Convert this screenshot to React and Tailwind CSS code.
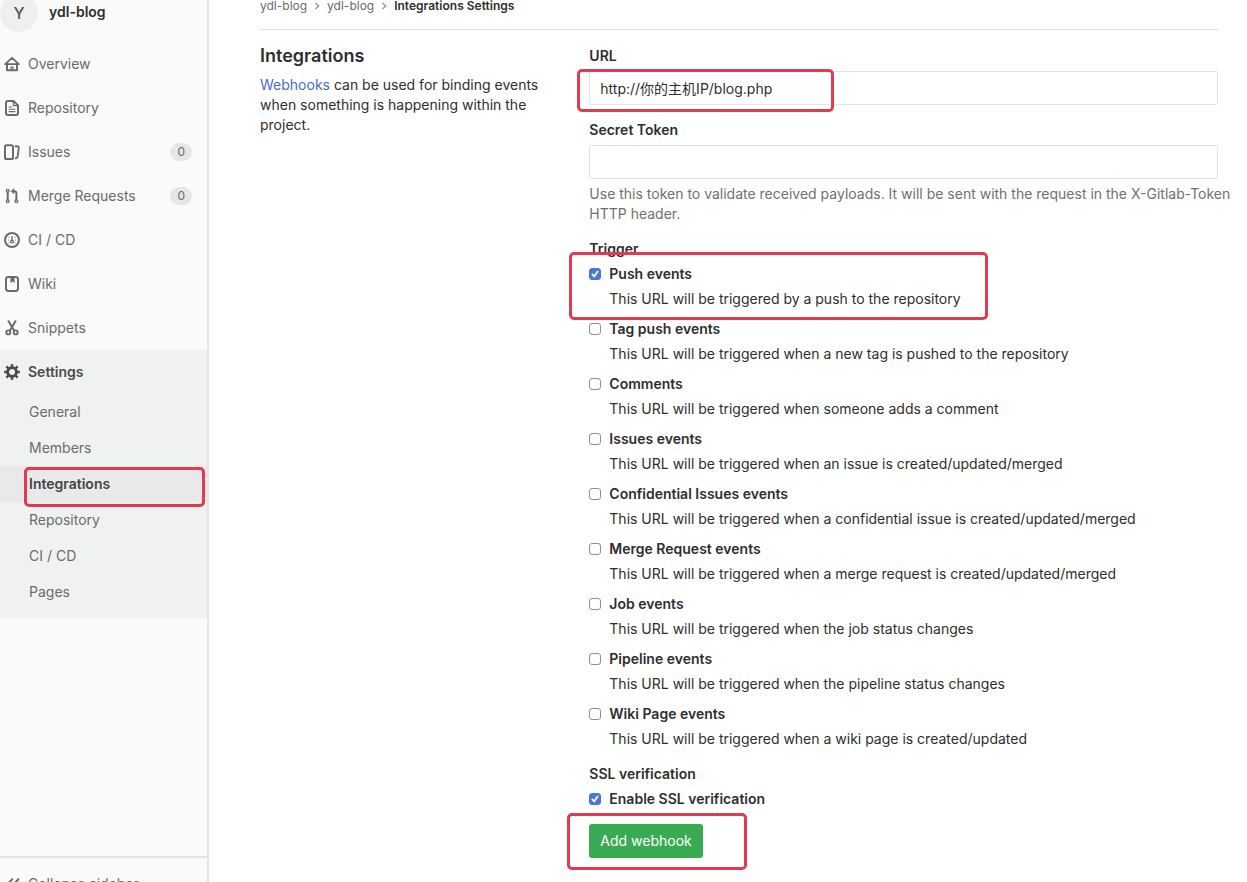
import { useState } from "react";

const Icon = ({ children }) => (
    <svg
        className="size-4 shrink-0"
        viewBox="0 0 16 16"
        fill="none"
        stroke="currentColor"
        strokeWidth="2"
        strokeLinecap="round"
        strokeLinejoin="round"
        aria-hidden="true"
    >
        {children}
    </svg>
);

const icons = {
    overview: (
        <Icon>
            <path d="M1.2 8.2 8 1.8l6.8 6.4z" strokeWidth="1.8" />
            <path d="M3 8.5V14.2h10V8.5" strokeWidth="2" />
            <path d="M7 13.5v-2.3h2v2.3" strokeWidth="1.2" />
        </Icon>
    ),
    repository: (
        <Icon>
            <path d="M4 1h5.5L14 5.5V13a2 2 0 0 1-2 2H4a2 2 0 0 1-2-2V3a2 2 0 0 1 2-2z" />
            <path d="M9.3 1.5V5.7H13.5" strokeWidth="1.2" />
            <path d="M5 7h2.5M5 9.3h6M5 11.6h6" strokeWidth="1.1" />
        </Icon>
    ),
    issues: (
        <Icon>
            <rect x="1" y="1.2" width="8" height="13.8" rx="1.6" />
            <path d="M11.6 2.2h1.6a1.6 1.6 0 0 1 1.6 1.8l-1.2 8.6a1.8 1.8 0 0 1-1.8 1.6" strokeWidth="1.9" />
        </Icon>
    ),
    merge: (
        <Icon>
            <circle cx="3.7" cy="2.8" r="1.4" strokeWidth="1.3" />
            <circle cx="3.7" cy="13.3" r="1.4" strokeWidth="1.3" />
            <circle cx="12.4" cy="13.3" r="1.4" strokeWidth="1.3" />
            <path d="M3.7 4.5v7" strokeWidth="2" />
            <path d="M12.4 11.5V5.3a2 2 0 0 0-2-2H9.6" strokeWidth="2" />
            <path d="M10 .9v4.8L7 3.3z" fill="currentColor" strokeWidth=".5" />
        </Icon>
    ),
    ci: (
        <Icon>
            <circle cx="8" cy="8" r="7" />
            <path d="M8 4.6v3.6" strokeWidth="1.3" />
            <circle cx="8" cy="9.5" r="1.4" strokeWidth="1.3" />
            <path d="M4.3 8h.1M11.6 8h.1M5 5.3h.1M10.9 5.3h.1M5 10.8h.1M10.9 10.8h.1" strokeWidth="1.1" />
        </Icon>
    ),
    wiki: (
        <Icon>
            <rect x="2" y="1" width="12" height="14" rx="2.4" />
            <path d="M6.6 1.5v5.2L8.5 5.2l1.9 1.5V1.5z" fill="currentColor" strokeWidth=".3" />
        </Icon>
    ),
    snippets: (
        <Icon>
            <path d="M4.6 1.2 9.9 10.2M11.4 1.2 6.1 10.2" />
            <circle cx="4.3" cy="12.4" r="2" strokeWidth="1.9" />
            <circle cx="11.7" cy="12.4" r="2" strokeWidth="1.9" />
        </Icon>
    ),
    settings: (
        <Icon>
            <circle cx="8" cy="8" r="4.5" strokeWidth="3" />
            <circle
                cx="8"
                cy="8"
                r="6.6"
                strokeWidth="2.6"
                strokeLinecap="butt"
                pathLength="16"
                strokeDasharray="0.9 1.1"
                strokeDashoffset="0.45"
            />
        </Icon>
    ),
};

const navItems = [
    { label: "Overview", icon: icons.overview },
    { label: "Repository", icon: icons.repository },
    { label: "Issues", icon: icons.issues, count: 0 },
    { label: "Merge Requests", icon: icons.merge, count: 0 },
    { label: "CI / CD", icon: icons.ci },
    { label: "Wiki", icon: icons.wiki },
    { label: "Snippets", icon: icons.snippets },
];

const settingsItems = ["General", "Members", "Integrations", "Repository", "CI / CD", "Pages"];

const triggers = [
    { id: "push", label: "Push events", text: "This URL will be triggered by a push to the repository" },
    { id: "tag", label: "Tag push events", text: "This URL will be triggered when a new tag is pushed to the repository" },
    { id: "comments", label: "Comments", text: "This URL will be triggered when someone adds a comment" },
    { id: "issues", label: "Issues events", text: "This URL will be triggered when an issue is created/updated/merged" },
    { id: "confidential", label: "Confidential Issues events", text: "This URL will be triggered when a confidential issue is created/updated/merged" },
    { id: "merge", label: "Merge Request events", text: "This URL will be triggered when a merge request is created/updated/merged" },
    { id: "job", label: "Job events", text: "This URL will be triggered when the job status changes" },
    { id: "pipeline", label: "Pipeline events", text: "This URL will be triggered when the pipeline status changes" },
    { id: "wiki", label: "Wiki Page events", text: "This URL will be triggered when a wiki page is created/updated" },
];

// red outline drawn over the part being pointed at
const Highlight = ({ className }) => (
    <div className={`pointer-events-none absolute z-10 rounded-[5px] border-3 border-[#e23a50] ${className}`} />
);

const CheckField = ({ id, label, defaultChecked }) => {
    const [checked, setChecked] = useState(Boolean(defaultChecked));

    return (
        <div className="flex h-5 items-center gap-2">
            <span className="grid size-3 place-items-center">
                <input
                    id={id}
                    type="checkbox"
                    checked={checked}
                    onChange={(e) => setChecked(e.target.checked)}
                    className="col-start-1 row-start-1 size-3 appearance-none rounded-[3px] border border-[#8f8f8f] bg-white checked:border-[#4a76d8] checked:bg-[#4a76d8]"
                />
                {checked && (
                    <svg className="pointer-events-none col-start-1 row-start-1 size-3" viewBox="0 0 12 12" fill="none" stroke="white" strokeWidth="1.8" strokeLinecap="round" strokeLinejoin="round" aria-hidden="true">
                        <path d="M3.4 6.4 5.2 8.5 8.6 3.6" />
                    </svg>
                )}
            </span>
            <label htmlFor={id} className="font-semibold">{label}</label>
        </div>
    );
};

const Sidebar = () => {
    return (
        <aside className="flex w-[209px] shrink-0 flex-col overflow-hidden border-r-2 border-[#e4e4e4] bg-[#fafafa] text-[#6b6b6b]">
            <a href="#" className="flex h-[42px] items-start gap-[11px] text-[#2e2e2e]">
                <span className="-mt-1.5 flex size-[38px] shrink-0 items-center justify-center rounded-full bg-[#eef0ef] text-base font-medium text-[#555]">
                    Y
                </span>
                <span className="leading-6 font-semibold">ydl-blog</span>
            </a>
            <nav>
                {navItems.map((item) => (
                    <a key={item.label} href="#" className="flex h-11 items-center gap-2 pr-[15px] pl-1">
                        {item.icon}
                        <span>{item.label}</span>
                        {item.count !== undefined && (
                            <span className="ml-auto rounded-full bg-[#e6e6e6] px-[7px] text-xs leading-[18px]">{item.count}</span>
                        )}
                    </a>
                ))}
                <div className="bg-[#f0f2f1] pb-2">
                    <a href="#" className="flex h-11 items-center gap-2 pl-1 font-semibold text-[#4a4a4a]">
                        {icons.settings}
                        <span>Settings</span>
                    </a>
                    {settingsItems.map((label) =>
                        label === "Integrations" ? (
                            <a key={label} href="#" className="relative flex h-9 items-center bg-[#e9e9e9] pl-[29px] font-semibold text-[#444]">
                                {label}
                                <Highlight className="top-px right-[2px] -bottom-[5px] left-6" />
                            </a>
                        ) : (
                            <a key={label} href="#" className="flex h-9 items-center pl-[29px]">
                                {label}
                            </a>
                        )
                    )}
                </div>
            </nav>
            <div className="mt-auto h-[26px] overflow-hidden border-t-2 border-[#e4e4e4]">
                <button type="button" className="flex h-[52px] items-center gap-2 pl-1">
                    <Icon>
                        <path d="M8.2 3.2 3.8 8l4.4 4.8M14.4 3.2 10 8l4.4 4.8" />
                    </Icon>
                    <span>Collapse sidebar</span>
                </button>
            </div>
        </aside>
    );
};

const Separator = () => (
    <svg className="size-2" viewBox="0 0 8 8" fill="none" stroke="#8a8a8a" strokeWidth="1.1" aria-hidden="true">
        <path d="M2.5 1 5.8 4 2.5 7" />
    </svg>
);

const App = () => {
    return (
        <div className="flex h-screen overflow-hidden bg-white font-[Inter,'Noto_Sans_CJK_SC',sans-serif] text-sm leading-5 text-[#2e2e2e]">
            <Sidebar />
            <main className="min-w-0 flex-1 pr-[29px] pl-[51px]">
                <nav className="flex h-[30px] items-start gap-1.5 border-b border-[#e3e3e3] text-xs leading-3 text-[#6b6b6b]">
                    <a href="#">ydl-blog</a>
                    <span className="flex h-3 items-center"><Separator /></span>
                    <a href="#">ydl-blog</a>
                    <span className="flex h-3 items-center"><Separator /></span>
                    <a href="#" className="font-semibold text-[#2e2e2e]">Integrations Settings</a>
                </nav>
                <div className="grid grid-cols-12 gap-x-[30px] pt-4">
                    <section className="col-span-4">
                        <h4 className="mb-[9px] text-lg leading-5 font-semibold">Integrations</h4>
                        <p>
                            <a href="#" className="text-[#4b6bc6]">Webhooks</a> can be used for binding events when something is happening within the project.
                        </p>
                    </section>
                    <form className="col-span-8 flex flex-col gap-[15px]" onSubmit={(e) => e.preventDefault()}>
                        <div className="flex flex-col gap-[5px]">
                            <label htmlFor="url" className="font-semibold">URL</label>
                            <div className="relative">
                                <input
                                    id="url"
                                    type="text"
                                    defaultValue="http://你的主机IP/blog.php"
                                    className="block h-[34px] w-full rounded-xs border border-[#e3e3e3] px-2.5"
                                />
                                <Highlight className="-top-0.5 -left-3 h-[43px] w-[257px]" />
                            </div>
                        </div>
                        <div className="flex flex-col gap-[5px]">
                            <label htmlFor="token" className="font-semibold">Secret Token</label>
                            <input id="token" type="text" className="block h-[34px] w-full rounded-xs border border-[#e3e3e3] px-2.5" />
                            <p className="-mr-5 text-[#707070]">
                                Use this token to validate received payloads. It will be sent with the request in the{" "}
                                <span className="whitespace-nowrap">X-Gitlab-Token</span> HTTP header.
                            </p>
                        </div>
                        <div>
                            <h5 className="mb-[5px] font-semibold">Trigger</h5>
                            <ul className="flex flex-col gap-2.5">
                                {triggers.map((trigger) => (
                                    <li key={trigger.id} className="relative">
                                        <CheckField id={trigger.id} label={trigger.label} defaultChecked={trigger.id === "push"} />
                                        <p className="mt-[5px] pl-5">{trigger.text}</p>
                                        {trigger.id === "push" && <Highlight className="-top-3 -left-5 h-[68px] w-[419px]" />}
                                    </li>
                                ))}
                            </ul>
                        </div>
                        <div>
                            <h5 className="mb-[5px] font-semibold">SSL verification</h5>
                            <CheckField id="ssl" label="Enable SSL verification" defaultChecked />
                        </div>
                        <div className="relative">
                            <button type="submit" className="block h-[34px] rounded-[3px] bg-[#38ab52] px-[11px] text-white">
                                Add webhook
                            </button>
                            <Highlight className="-top-[11px] -left-[22px] h-[57px] w-[180px]" />
                        </div>
                    </form>
                </div>
            </main>
        </div>
    );
};

export default App;
